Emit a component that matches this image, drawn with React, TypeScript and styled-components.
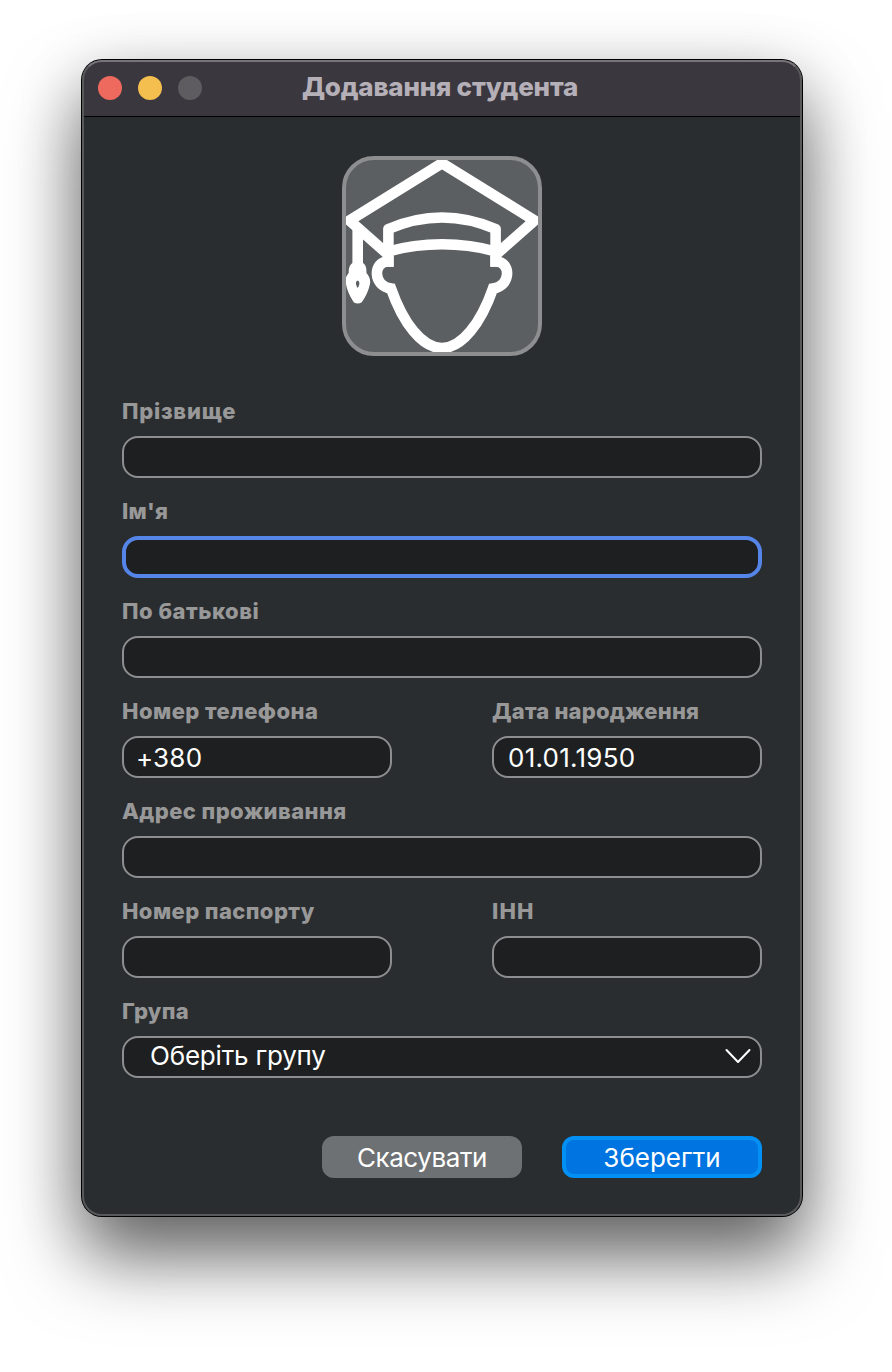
import React from "react";
import styled, { createGlobalStyle } from "styled-components";

const GlobalStyle = createGlobalStyle`
  *, *::before, *::after { box-sizing: border-box; }
  body {
    margin: 0;
    background: #fff;
    font-family: Inter, "Liberation Sans", sans-serif;
  }
`;

const Desktop = styled.main`
  height: 1372px;
  padding: 60px 90px 0 82px;
  overflow: hidden;
`;

const Window = styled.section`
  position: relative;
  display: flex;
  flex-direction: column;
  height: 1156px;
  border-radius: 20px;
  background: #2a2d30;
  box-shadow: 0 0 0 1px #000, 0 42px 74px rgba(0, 0, 0, 0.54), 0 16px 66px rgba(0, 0, 0, 0.2);

  &::after {
    content: "";
    position: absolute;
    inset: 0;
    border: 2px solid #58595b;
    border-top-color: #77747a;
    border-radius: 20px;
    pointer-events: none;
  }
`;

const TitleBar = styled.header`
  display: grid;
  grid-template-columns: 120px 1fr 140px;
  align-items: center;
  height: 57px;
  padding-left: 16px;
  border-radius: 20px 20px 0 0;
  border-bottom: 1px solid #000;
  background: #3b373e;
`;

const Lights = styled.div`
  display: flex;
  gap: 16px;
`;

const Light = styled.span<{ $color: string }>`
  width: 24px;
  height: 24px;
  border-radius: 50%;
  background: ${(p) => p.$color};
`;

const Title = styled.h1`
  margin: 0;
  padding-bottom: 2px;
  color: #b5b0b8;
  font-size: 26px;
  font-weight: 800;
  line-height: 32px;
  letter-spacing: -0.2px;
  text-align: center;
  white-space: nowrap;
`;

const Form = styled.form`
  display: flex;
  flex-direction: column;
  padding: 39px 40px 0;
`;

const Avatar = styled.div`
  align-self: center;
  width: 200px;
  height: 200px;
  border: 4px solid #8d8e8f;
  border-radius: 32px;
  background: #5c5f61;
  overflow: hidden;

  svg { display: block; }
`;

const Fields = styled.div`
  display: grid;
  grid-template-columns: 270px 270px;
  column-gap: 100px;
  row-gap: 21px;
  margin-top: 43px;
`;

const Field = styled.label<{ $wide?: boolean }>`
  display: flex;
  flex-direction: column;
  grid-column: ${(p) => (p.$wide ? "1 / -1" : "auto")};
`;

const Caption = styled.span<{ $spacing: number }>`
  height: 37px;
  color: #989898;
  font-size: 22px;
  font-weight: 800;
  line-height: 25px;
  letter-spacing: ${(p) => p.$spacing}px;
  white-space: nowrap;
`;

const Input = styled.input<{ $active?: boolean; $inset?: number; $tracking?: number }>`
  width: 100%;
  height: 42px;
  padding: 0 12px 0 ${(p) => p.$inset ?? 14}px;
  border: ${(p) => (p.$active ? "4px solid #5585e8" : "2px solid #8d8e8f")};
  border-radius: 16px;
  outline: none;
  background: #1e1f21;
  color: #fff;
  font: 400 26px/34px Inter, "Liberation Sans", sans-serif;
  letter-spacing: ${(p) => p.$tracking ?? 0}px;
`;

const Select = styled.button`
  display: flex;
  align-items: center;
  justify-content: space-between;
  width: 100%;
  height: 42px;
  padding: 0 9px 2px 26px;
  border: 2px solid #8d8e8f;
  border-radius: 16px;
  background: #1e1f21;
  color: #fff;
  font: 400 26px/34px Inter, "Liberation Sans", sans-serif;
  letter-spacing: -0.2px;
`;

const Actions = styled.footer`
  display: flex;
  justify-content: flex-end;
  gap: 40px;
  margin-top: 58px;
`;

const Button = styled.button<{ $primary?: boolean }>`
  width: 200px;
  height: 42px;
  padding: 2px 0 0;
  border: 4px solid ${(p) => (p.$primary ? "#0390f5" : "#6e7173")};
  border-radius: 12px;
  background: ${(p) => (p.$primary ? "#0074e0" : "#6e7173")};
  color: #fff;
  font: 400 26px/32px Inter, "Liberation Sans", sans-serif;
  letter-spacing: ${(p) => (p.$primary ? 0 : -0.4)}px;
`;

const StudentIcon = () => (
  <svg width="192" height="192" viewBox="0 0 192 192" fill="none" stroke="#fff" strokeWidth="10.6">
    <path d="M42 94.500L3.5 60.5L96 3.2L188.5 60.5L150 94.500" strokeLinejoin="round" />
    <path d="M42.4 106.7V69Q96 46 149.6 69V106.7" strokeLinejoin="round" />
    <path d="M40 92Q96 76.600 152 92" />
    <path d="M47.600 101.500H42C27 101.500 26.500 126 45 128.500C57 163 76 188 96 188S135 163 147 128.500C165.500 126 165 101.500 150 101.500H144.400" />
    <path d="M11.700 66V108" />
    <path
      d="M6.500 103C3.500 105 2.700 108 2.700 113C0 116 -1 119 0 124C1.500 132 5 138 8 142.500Q11.700 144.500 15.500 142.500C19 138 22.500 131 24 124C24.800 119 23 116 20.500 113C20.500 108 20 105 17 103ZM11.700 120.500C9.500 121.500 9.300 124 11.700 128C14 124 13.900 121.500 11.700 120.500Z"
      fill="#fff"
      fillRule="evenodd"
      stroke="none"
    />
  </svg>
);

const Chevron = () => (
  <svg width="26" height="16" viewBox="0 0 26 16" fill="none" stroke="#fff" strokeWidth="2">
    <path d="M1.500 2L13 14L24.500 2" strokeLinecap="round" strokeLinejoin="round" />
  </svg>
);

type FieldSpec = {
  label: string;
  spacing: number;
  wide?: boolean;
  active?: boolean;
  value?: string;
  inset?: number;
  tracking?: number;
};

const FIELDS: FieldSpec[] = [
  { label: "Прізвище", spacing: 0.75, wide: true },
  { label: "Ім'я", spacing: 0.3, wide: true, active: true },
  { label: "По батькові", spacing: 0.5, wide: true },
  { label: "Номер телефона", spacing: 0.45, value: "+380", inset: 12, tracking: 0.2 },
  { label: "Дата народження", spacing: 0.2, value: "01.01.1950", tracking: 0.25 },
  { label: "Адрес проживання", spacing: 0.4, wide: true },
  { label: "Номер паспорту", spacing: 0.4 },
  { label: "ІНН", spacing: 1.1 },
];

export default function App() {
  return (
    <>
      <GlobalStyle />
      <Desktop>
        <Window>
          <TitleBar>
            <Lights>
              <Light $color="#ee6a5f" />
              <Light $color="#f5bf4f" />
              <Light $color="#5e5b61" />
            </Lights>
            <Title>Додавання студента</Title>
          </TitleBar>
          <Form>
            <Avatar>
              <StudentIcon />
            </Avatar>
            <Fields>
              {FIELDS.map((f) => (
                <Field key={f.label} $wide={f.wide}>
                  <Caption $spacing={f.spacing}>{f.label}</Caption>
                  <Input $active={f.active} $inset={f.inset} $tracking={f.tracking} defaultValue={f.value} />
                </Field>
              ))}
              <Field as="div" $wide>
                <Caption $spacing={0.3}>Група</Caption>
                <Select type="button">
                  Оберіть групу
                  <Chevron />
                </Select>
              </Field>
            </Fields>
            <Actions>
              <Button type="button">Скасувати</Button>
              <Button type="button" $primary>
                Зберегти
              </Button>
            </Actions>
          </Form>
        </Window>
      </Desktop>
    </>
  );
}
